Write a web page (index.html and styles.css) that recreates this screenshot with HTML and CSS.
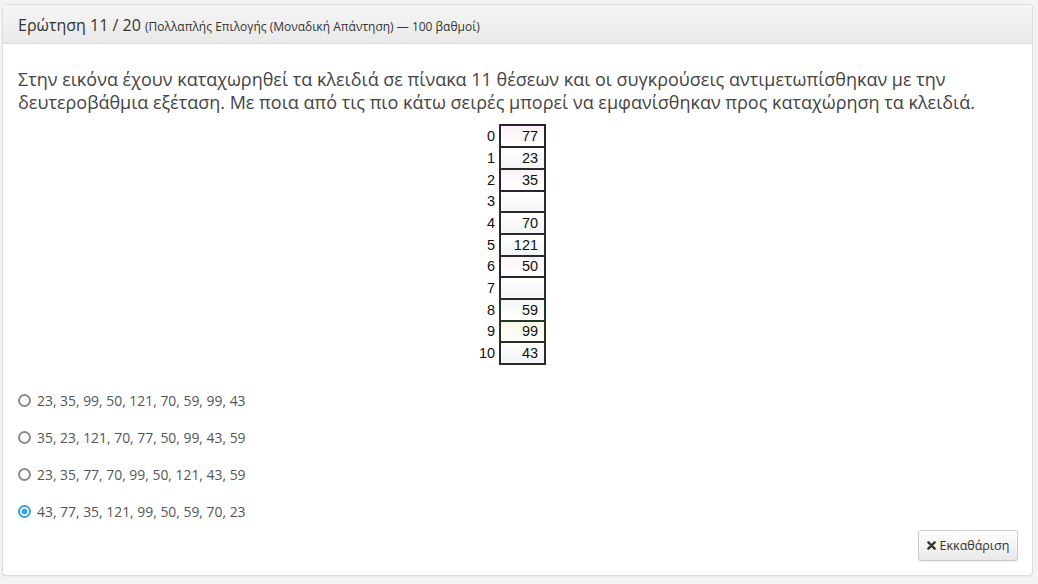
FILE: index.html
```html
<!DOCTYPE html>
<html lang="el">
<head>
<meta charset="utf-8">
<link rel="stylesheet" href="styles.css">
</head>
<body>
<div class="panel">
  <div class="panel-head">
    <span class="q-title">Ερώτηση 11 / 20</span>
    <span class="q-meta">(Πολλαπλής Επιλογής (Μοναδική Απάντηση) — 100 βαθμοί)</span>
  </div>
  <div class="panel-body">
    <p class="q-text">Στην εικόνα έχουν καταχωρηθεί τα κλειδιά σε πίνακα 11 θέσεων και οι συγκρούσεις αντιμετωπίσθηκαν με την δευτεροβάθμια εξέταση. Με ποια από τις πιο κάτω σειρές μπορεί να εμφανίσθηκαν προς καταχώρηση τα κλειδιά.</p>
    <div class="figure">
      <table class="hash">
        <tr><th>0</th><td class="c-pink">77</td></tr>
        <tr><th>1</th><td>23</td></tr>
        <tr><th>2</th><td class="c-pink">35</td></tr>
        <tr><th>3</th><td></td></tr>
        <tr><th>4</th><td>70</td></tr>
        <tr><th>5</th><td>121</td></tr>
        <tr><th>6</th><td class="c-pink">50</td></tr>
        <tr><th>7</th><td></td></tr>
        <tr><th>8</th><td class="c-green">59</td></tr>
        <tr><th>9</th><td class="c-yellow">99</td></tr>
        <tr><th>10</th><td>43</td></tr>
      </table>
    </div>
    <ul class="options">
      <li><span class="radio"></span>23, 35, 99, 50, 121, 70, 59, 99, 43</li>
      <li><span class="radio"></span>35, 23, 121, 70, 77, 50, 99, 43, 59</li>
      <li><span class="radio"></span>23, 35, 77, 70, 99, 50, 121, 43, 59</li>
      <li><span class="radio checked"></span>43, 77, 35, 121, 99, 50, 59, 70, 23</li>
    </ul>
    <div class="actions">
      <button class="btn"><svg class="x" viewBox="0 0 10 10" width="9" height="9"><path d="M1.5 1.5 L8.5 8.5 M8.5 1.5 L1.5 8.5" stroke="#333" stroke-width="2.6" stroke-linecap="round"/></svg>Εκκαθάριση</button>
    </div>
  </div>
</div>
</body>
</html>
```

FILE: styles.css
```css
html, body {
  margin: 0;
  padding: 0;
}
body {
  background: #f3f3f3;
  font-family: "Open Sans", "Noto Sans", sans-serif;
  color: #333;
  padding: 4px 5px 8px 2px;
}
.panel {
  background: #fff;
  border: 1px solid #ddd;
  border-radius: 4px;
  height: 570px;
  box-shadow: 0 1px 1px rgba(0,0,0,0.05);
  display: flex;
  flex-direction: column;
}
.panel-head {
  height: 40px;
  box-sizing: border-box;
  padding: 9px 15px 0;
  background: linear-gradient(#f6f6f6, #e9e9e9);
  border-bottom: 1px solid #dcdcdc;
  border-radius: 3px 3px 0 0;
  white-space: nowrap;
}
.q-title {
  font-size: 16px;
  color: #333;
}
.q-meta {
  font-size: 12px;
  color: #333;
}
.panel-body {
  padding: 24px 15px 14px;
  flex: 1;
  display: flex;
  flex-direction: column;
}
.q-text {
  margin: 0;
  font-size: 18px;
  line-height: 23px;
  color: #444;
}
.figure {
  display: flex;
  justify-content: center;
  margin-top: 10px;
  padding-right: 10px;
}
.hash {
  border-collapse: collapse;
  font-family: "Liberation Sans", Arial, sans-serif;
  font-size: 14.5px;
  color: #111;
}
.hash th {
  font-weight: normal;
  text-align: right;
  padding: 0 4px 0 0;
  height: 19.7px;
  line-height: 18px;
}
.hash td {
  width: 37px;
  border: 2px solid #2a2a2a;
  text-align: right;
  padding: 0 6px 0 0;
  height: 19.7px;
  line-height: 18px;
  background: linear-gradient(#fff, #f3f5f7);
}
.hash td.c-pink { background: linear-gradient(#fbf2f8, #fff); border-color: #2b2233; }
.hash td.c-green { background: linear-gradient(#f1f7f2, #fff); border-color: #1f3a22; }
.hash td.c-yellow { background: linear-gradient(#fbfae6, #fff); border-color: #2f2f1e; }
.options {
  list-style: none;
  margin: 17px 0 0;
  padding: 0;
}
.options li {
  display: flex;
  align-items: center;
  font-size: 13.9px;
  color: #555;
  height: 37px;
}
.radio {
  width: 9px;
  height: 9px;
  border: 2px solid #8a8a94;
  border-radius: 50%;
  margin: 0 6px 0 0;
  flex: none;
  box-sizing: content-box;
}
.radio.checked {
  border-color: #35a4e0;
  background: radial-gradient(circle, #35a4e0 0 2.6px, #fff 3.3px);
}
.actions {
  margin-top: auto;
  display: flex;
  justify-content: flex-end;
  padding-right: 0;
  padding-bottom: 0;
}
.btn {
  font-family: "Open Sans", "Noto Sans", sans-serif;
  font-size: 12.5px;
  color: #333;
  height: 31px;
  width: 100px;
  margin-right: -1px;
  border: 1px solid #ccc;
  border-radius: 3px;
  background: linear-gradient(#fff, #e8e8e8);
  display: flex;
  align-items: center;
  justify-content: center;
  gap: 4px;
  padding: 0;
  box-shadow: 0 1px 1px rgba(0,0,0,0.08);
}
.x {
  display: block;
}
```
